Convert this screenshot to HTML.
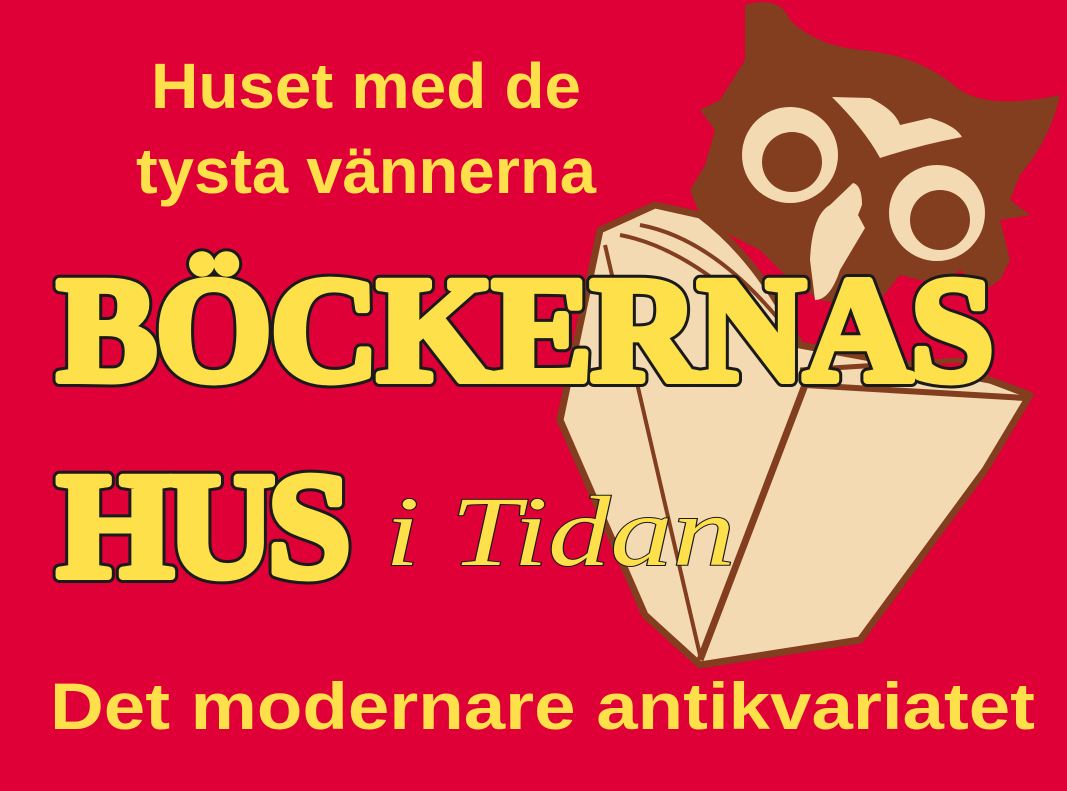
<!DOCTYPE html>
<html><head><meta charset="utf-8"><style>
html,body{margin:0;padding:0;background:#de0036;}
svg{display:block}
</style></head><body>
<svg width="1067" height="791" viewBox="0 0 1067 791" xmlns="http://www.w3.org/2000/svg">
<rect width="1067" height="791" fill="#de0036"/>
<!-- owl head -->
<path d="M745,5 Q780,-5 790,20 Q815,45 860,50 Q920,55 960,90 Q990,110 1060,95 Q1050,140 1020,175 L1010,200 L1030,215 L1000,220 L1010,260 L1000,280 L985,290 L960,270 L940,285 L900,275 L880,300 L850,305 L820,300 L790,280 L760,250 L720,230 L700,215 L690,190 L705,165 L715,130 L700,110 L720,100 L745,60 Z" fill="#823e1e"/>
<path d="M832,97 L870,98 Q895,110 900,125 L930,118 Q955,125 962,137 Q920,145 880,158 Q865,130 832,97 Z" fill="#f3dab3"/>
<circle cx="790" cy="155" r="48" fill="#f3dab3"/>
<circle cx="792" cy="162" r="30" fill="#823e1e"/>
<circle cx="937" cy="213" r="48" fill="#f3dab3"/>
<circle cx="940" cy="220" r="30" fill="#823e1e"/>
<path d="M853,183 Q862,185 862,205 L858,215 L865,228 L840,270 Q830,300 815,300 L810,260 Q812,215 830,205 Z" fill="#f3dab3"/>
<!-- book -->
<path d="M600,230 L655,205 L700,215 Q760,260 800,345 L990,380 L1030,395 L985,470 L860,640 L700,665 L645,615 L560,420 Z" fill="#f3dab3" stroke="#823e1e" stroke-width="7" stroke-linejoin="round"/>
<path d="M805,385 L1025,398" stroke="#823e1e" stroke-width="6" fill="none"/>
<path d="M805,385 L700,660" stroke="#823e1e" stroke-width="7" fill="none"/>
<path d="M620,235 Q700,250 790,350 M640,225 Q720,240 795,340" stroke="#823e1e" stroke-width="4" fill="none"/>
<path d="M605,245 Q640,400 700,655" stroke="#823e1e" stroke-width="4" fill="none"/>
<path d="M800,370 L960,360 L990,380" stroke="#823e1e" stroke-width="5" fill="none"/>
<!-- text -->
<g font-family="Liberation Sans, sans-serif" font-weight="bold" fill="#fde04a">
<text x="366" y="108" font-size="64" text-anchor="middle" textLength="430" lengthAdjust="spacingAndGlyphs">Huset med de</text>
<text x="366" y="193" font-size="64" text-anchor="middle" textLength="460" lengthAdjust="spacingAndGlyphs">tysta vännerna</text>
<text x="50" y="729" font-size="66" textLength="985" lengthAdjust="spacingAndGlyphs">Det modernare antikvariatet</text>
</g>
<g font-family="Liberation Serif, serif" font-weight="bold" font-size="150" lengthAdjust="spacingAndGlyphs">
<g fill="#1a1a1a" stroke="#1a1a1a" stroke-width="14" stroke-linejoin="round">
<text x="57" y="380" textLength="937">BÖCKERNAS</text>
<text x="57" y="576" textLength="294">HUS</text>
</g>
<g fill="#fde04a" stroke="#fde04a" stroke-width="8" stroke-linejoin="round">
<text x="57" y="380" textLength="937">BÖCKERNAS</text>
<text x="57" y="576" textLength="294">HUS</text>
</g>
</g>
<text x="385" y="565" font-family="Liberation Serif, serif" font-style="italic" font-size="100" fill="#fde04a" stroke="#1a1a1a" stroke-width="2" paint-order="stroke" textLength="350" lengthAdjust="spacingAndGlyphs">i Tidan</text>
</svg>
</body></html>
